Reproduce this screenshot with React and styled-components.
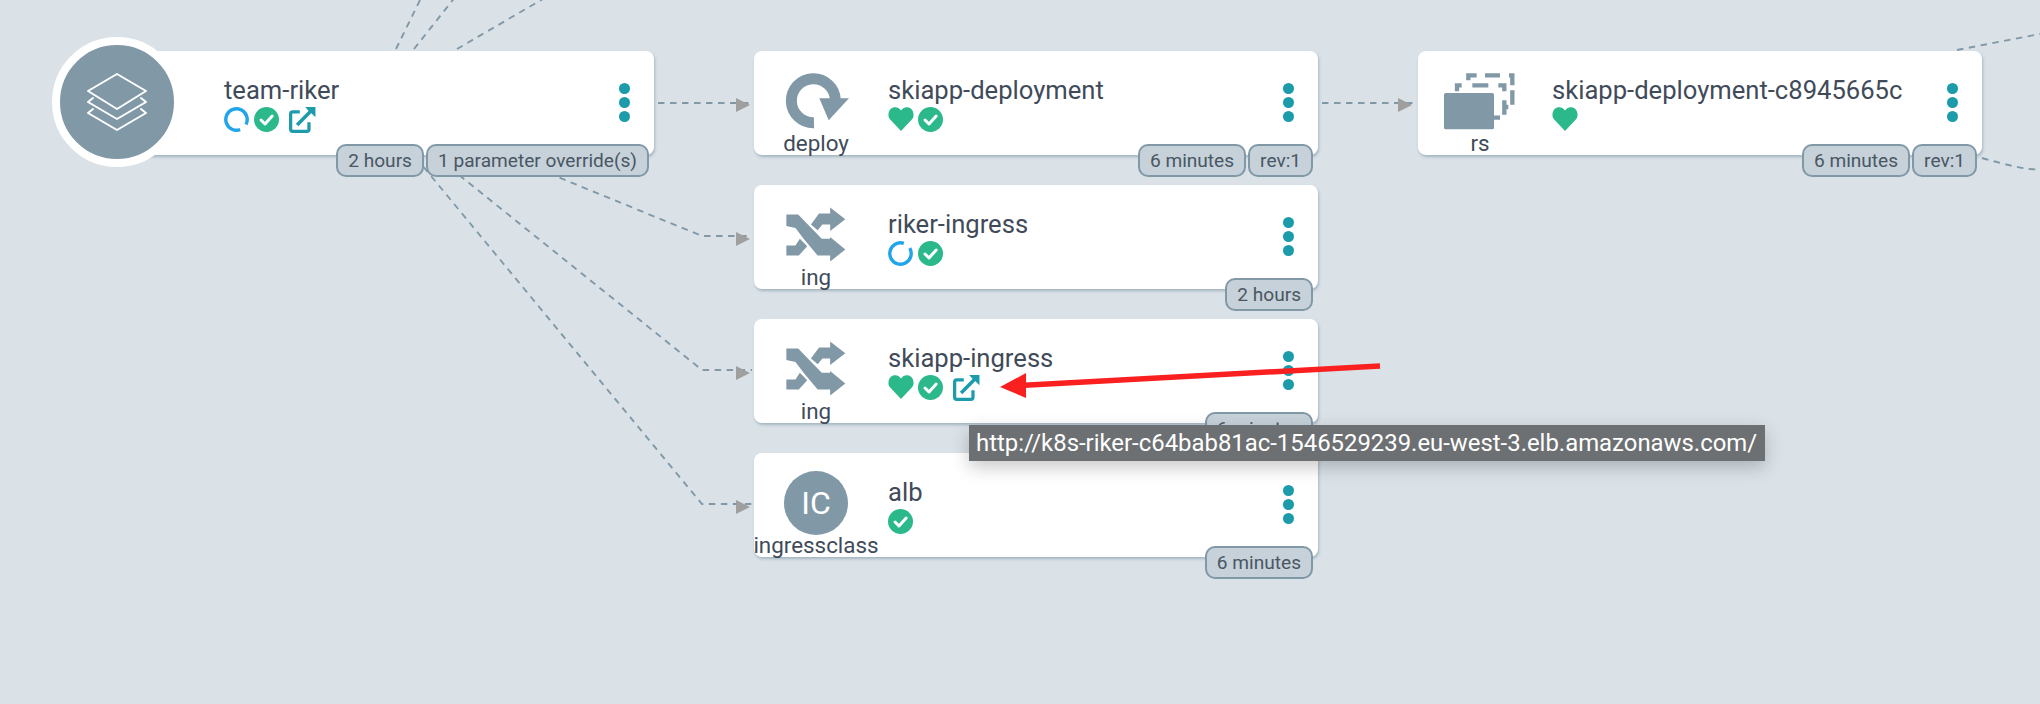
import React from 'react';
import styled, { createGlobalStyle } from 'styled-components';

const Global = createGlobalStyle`
  html, body { margin: 0; padding: 0; background: #dae2e8; }
  body { font-family: Roboto, "Liberation Sans", sans-serif; }
`;

const Canvas = styled.div`
  position: relative;
  width: 2040px;
  height: 704px;
  overflow: hidden;
  background: #dae2e8;
  color: #3f4b59;
`;

const EdgeLayer = styled.svg`
  position: absolute;
  left: 0;
  top: 0;
`;

const Card = styled.div`
  position: absolute;
  left: ${p => p.$x}px;
  top: ${p => p.$y}px;
  width: 564px;
  height: 104px;
  box-sizing: border-box;
  display: flex;
  background: #fff;
  border-radius: 8px;
  box-shadow: 1px 2px 3px rgba(129, 152, 167, 0.6);
`;

const KindColumn = styled.div`
  width: 124px;
  flex: none;
  height: 100%;
  display: flex;
  flex-direction: column;
  align-items: center;
`;

const IconBox = styled.div`
  height: 80px;
  flex: none;
  box-sizing: border-box;
  padding-top: ${p => p.$top}px;
  display: flex;
  justify-content: center;
  align-items: flex-start;
  & > svg { flex: none; }
`;

const KindLabel = styled.div`
  font-size: 22.4px;
  line-height: 24px;
  white-space: nowrap;
  color: #3f4b59;
`;

const Initials = styled.div`
  width: 64px;
  height: 64px;
  flex: none;
  border-radius: 50%;
  background: #8198a7;
  color: #fff;
  font-size: 32px;
  display: flex;
  align-items: center;
  justify-content: center;
`;

const AppCircle = styled.div`
  position: absolute;
  left: -38px;
  top: -14px;
  width: 114px;
  height: 114px;
  border: 8px solid #fff;
  border-radius: 50%;
  background: #8198a7;
  display: flex;
  align-items: center;
  justify-content: center;
`;

const Body = styled.div`
  margin-left: 10px;
  padding-top: 23px;
  flex: 1;
  min-width: 0;
`;

const Title = styled.div`
  font-size: 25.6px;
  line-height: 32px;
  color: #3f4b59;
  white-space: nowrap;
`;

const StatusRow = styled.div`
  display: flex;
  align-items: center;
  gap: 4px;
  height: 28px;
  margin-top: -1px;
  & > svg { flex: none; }
`;

const Menu = styled.div`
  position: absolute;
  right: 24px;
  top: 32px;
  display: flex;
  flex-direction: column;
  gap: 3px;
`;

const Dot = styled.span`
  width: 11px;
  height: 11px;
  border-radius: 50%;
  background: #1c9bab;
`;

const Badges = styled.div`
  position: absolute;
  right: 5px;
  bottom: -22px;
  display: flex;
  gap: 2px;
`;

const Badge = styled.div`
  height: 33px;
  box-sizing: border-box;
  padding: 0 10px;
  display: flex;
  align-items: center;
  border: 2px solid #8198a7;
  border-radius: 10px;
  background: #c6d1da;
  color: #495763;
  font-size: 19.1px;
  white-space: nowrap;
`;

const Tooltip = styled.div`
  position: absolute;
  left: 969px;
  top: 425px;
  height: 36px;
  box-sizing: border-box;
  padding: 0 8px 0 7px;
  display: flex;
  align-items: center;
  background: #6d7072;
  color: #fff;
  font-size: 23.9px;
  white-space: nowrap;
  box-shadow: 0 6px 18px rgba(0, 0, 0, 0.22);
`;

const ArrowLayer = styled.svg`
  position: absolute;
  left: 0;
  top: 0;
  pointer-events: none;
`;

const Heart = () => (
  <svg width="26" height="24" viewBox="0 0 26 24">
    <path fill="#2bb98c" d="M13 24 L2.2 12.6 C-1 9 0.3 2.4 4.6 0.8 C8 -0.4 11.2 0.8 13 3.6 C14.8 0.8 18 -0.4 21.4 0.8 C25.7 2.4 27 9 23.8 12.6 Z" />
  </svg>
);

const Check = () => (
  <svg width="25" height="25" viewBox="0 0 25 25">
    <circle cx="12.5" cy="12.5" r="12.5" fill="#2bb98c" />
    <path d="M7 13 L11 17 L18.2 9" fill="none" stroke="#fff" strokeWidth="3" strokeLinecap="round" strokeLinejoin="round" />
  </svg>
);

const Spinner = ({ rotate = 0 }) => (
  <svg width="26" height="25" viewBox="0 0 26 25">
    <circle
      cx="12.5" cy="12.5" r="10.7" fill="none" stroke="#21a5ea" strokeWidth="3.4"
      strokeDasharray="59 8.2" transform={`rotate(${rotate} 12.5 12.5)`}
    />
  </svg>
);

const External = () => (
  <svg width="27" height="27" viewBox="0 0 50 50" style={{ marginLeft: 6 }}>
    <path d="M20 11 H7 Q3 11 3 15 V42 Q3 47 7 47 H33 Q37 47 37 43 V30" fill="none" stroke="#1c9bab" strokeWidth="6" />
    <path d="M15 35 L42 8" fill="none" stroke="#1c9bab" strokeWidth="6.5" />
    <path d="M30 2 H49 V21 L42 14 L36 9 Z" fill="#1c9bab" />
  </svg>
);

const Layers = () => (
  <svg width="62" height="62" viewBox="0 0 62 62" fill="none" stroke="#fff" strokeWidth="2" strokeLinejoin="round" strokeLinecap="round">
    <path d="M2 20 L31 3 L60 20 L31 38 Z" />
    <path d="M7 27 L2 31 L31 48 L60 31 L55 27" />
    <path d="M7 38 L2 42 L31 59 L60 42 L55 38" />
  </svg>
);

const DeployIcon = () => (
  <svg width="80" height="70" viewBox="0 0 240 210">
    <path d="M114 173 A66 66 0 1 1 178 104" fill="none" stroke="#8198a7" strokeWidth="33" />
    <path d="M130 100 H219 L158 166 Z" fill="#8198a7" />
  </svg>
);

const IngressIcon = () => (
  <svg width="64" height="58" viewBox="28 30 190 172">
    <path fill="#8198a7" d="M35 58 H70 L140 130 H165 V125 L210 162 L165 198 V180 H128 L88 132 L62 98 L35 92 Z" />
    <path fill="#8198a7" d="M165 37 L210 72 L165 107 V88 H142 L128 105 L108 88 L132 55 H165 Z" />
    <path fill="#8198a7" d="M35 150 H62 L75 130 L97 152 L72 180 H35 Z" />
  </svg>
);

const ReplicaIcon = () => (
  <svg width="72" height="60" viewBox="24 20 216 180" style={{ marginRight: 2 }}>
    <rect x="27" y="83" width="150" height="109" rx="5" fill="#8198a7" />
    <path
      fill="none" stroke="#8198a7" strokeWidth="13"
      d="M66 78 V60 H80 M112 60 H160 M190 60 H208 V78 M208 105 V148 M177 157 H195 M208 125 H220 M100 45 V30 H125 M150 30 H195 M222 30 H232 V60 M232 75 V118"
    />
  </svg>
);

const nodes = [
  { name: 'skiapp-deployment', kind: 'deploy', x: 754, y: 51, top: 14, icon: <DeployIcon />, status: ['heart', 'check'], badges: ['6 minutes', 'rev:1'] },
  { name: 'riker-ingress', kind: 'ing', x: 754, y: 185, top: 20, icon: <IngressIcon />, status: ['spin', 'check'], badges: ['2 hours'] },
  { name: 'skiapp-ingress', kind: 'ing', x: 754, y: 319, top: 20, icon: <IngressIcon />, status: ['heart', 'check', 'ext'], badges: ['6 minutes'] },
  { name: 'alb', kind: 'ingressclass', x: 754, y: 453, top: 18, icon: <Initials>IC</Initials>, status: ['check'], badges: ['6 minutes'] },
  { name: 'skiapp-deployment-c8945665c', kind: 'rs', x: 1418, y: 51, top: 21, icon: <ReplicaIcon />, status: ['heart'], badges: ['6 minutes', 'rev:1'] },
];

const statusIcon = (s, i, rot) => {
  if (s === 'heart') return <Heart key={i} />;
  if (s === 'check') return <Check key={i} />;
  if (s === 'spin') return <Spinner key={i} rotate={rot} />;
  return <External key={i} />;
};

const NodeMenu = () => (
  <Menu>
    <Dot />
    <Dot />
    <Dot />
  </Menu>
);

const Node = ({ n }) => (
  <Card $x={n.x} $y={n.y}>
    <KindColumn>
      <IconBox $top={n.top}>{n.icon}</IconBox>
      <KindLabel>{n.kind}</KindLabel>
    </KindColumn>
    <Body>
      <Title>{n.name}</Title>
      <StatusRow>{n.status.map((s, i) => statusIcon(s, i, -30))}</StatusRow>
    </Body>
    <NodeMenu />
    <Badges>
      {n.badges.map(b => <Badge key={b}>{b}</Badge>)}
    </Badges>
  </Card>
);

const edges = [
  'M658 103 H752',
  'M1322 103 H1416',
  'M504 155 L702 236 H752',
  'M403 130 L702 370 H752',
  'M393 130 L702 504 H752',
  'M396 49 L422 -4',
  'M414 49 L456 -4',
  'M457 49 L548 -4',
  'M1957 50 L2050 32',
  'M1982 158 Q2010 166 2028 169 L2050 170',
];

const heads = [[736, 105], [736, 239], [736, 373], [736, 507], [1398, 105]];

export default function App() {
  return (
    <Canvas>
      <Global />
      <EdgeLayer width="2040" height="704" viewBox="0 0 2040 704">
        {edges.map(d => (
          <path key={d} d={d} fill="none" stroke="#8198a7" strokeWidth="1.9" strokeDasharray="6.5 5.5" />
        ))}
        {heads.map(([x, y]) => (
          <polygon key={`${x}-${y}`} points={`${x},${y - 7} ${x + 14},${y} ${x},${y + 7}`} fill="#9f9f9f" />
        ))}
      </EdgeLayer>

      <Card $x={90} $y={51}>
        <AppCircle><Layers /></AppCircle>
        <KindColumn />
        <Body>
          <Title>team-riker</Title>
          <StatusRow>
            <Spinner rotate={70} />
            <Check />
            <External />
          </StatusRow>
        </Body>
        <NodeMenu />
        <Badges>
          <Badge>2 hours</Badge>
          <Badge>1 parameter override(s)</Badge>
        </Badges>
      </Card>

      {nodes.map(n => <Node key={n.name} n={n} />)}

      <Tooltip>http://k8s-riker-c64bab81ac-1546529239.eu-west-3.elb.amazonaws.com/</Tooltip>

      <ArrowLayer width="2040" height="704" viewBox="0 0 2040 704">
        <path d="M1380 366 L1020 385.5" stroke="#fb2020" strokeWidth="5.5" fill="none" />
        <polygon points="1000,387 1026,373 1026,398" fill="#fb2020" />
      </ArrowLayer>
    </Canvas>
  );
}
